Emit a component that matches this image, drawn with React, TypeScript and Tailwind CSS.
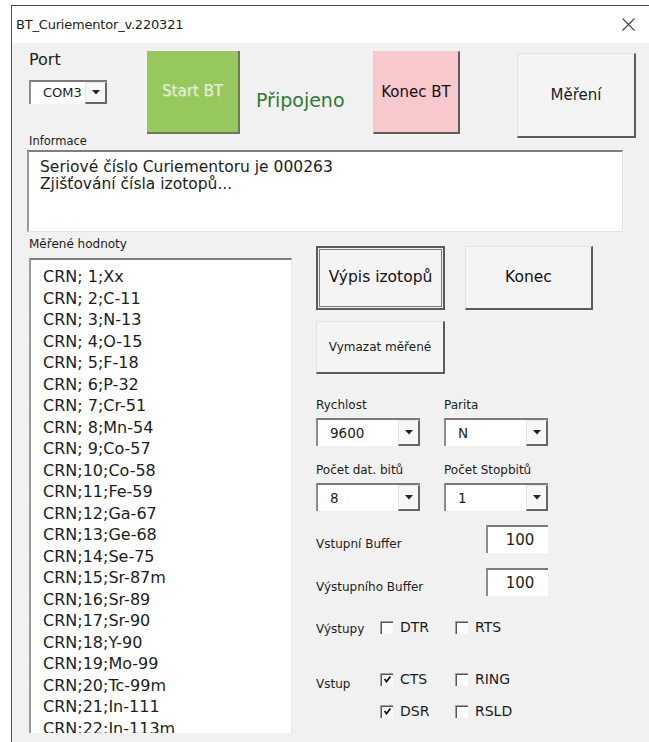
import React from "react";

const font = { fontFamily: '"DejaVu Sans", Verdana, sans-serif' };

const isotopes = [
  "CRN; 1;Xx",
  "CRN; 2;C-11",
  "CRN; 3;N-13",
  "CRN; 4;O-15",
  "CRN; 5;F-18",
  "CRN; 6;P-32",
  "CRN; 7;Cr-51",
  "CRN; 8;Mn-54",
  "CRN; 9;Co-57",
  "CRN;10;Co-58",
  "CRN;11;Fe-59",
  "CRN;12;Ga-67",
  "CRN;13;Ge-68",
  "CRN;14;Se-75",
  "CRN;15;Sr-87m",
  "CRN;16;Sr-89",
  "CRN;17;Sr-90",
  "CRN;18;Y-90",
  "CRN;19;Mo-99",
  "CRN;20;Tc-99m",
  "CRN;21;In-111",
  "CRN;22;In-113m",
];

function DropArrow() {
  return (
    <div className="flex h-full w-[22px] items-center justify-center border-l border-t border-l-[#e6e6e6] border-t-[#e6e6e6] border-r-2 border-b-2 border-r-[#666] border-b-[#666] bg-[#f7f7f7]">
      <svg width="8" height="5" viewBox="0 0 8 5">
        <path d="M0 0 H8 L4 4.5 Z" fill="#222" />
      </svg>
    </div>
  );
}

function Combo({ value, w, h, textCls }: { value: string; w: string; h: string; textCls: string }) {
  return (
    <div className={`flex ${w} ${h} border-l-2 border-t-2 border-l-[#8c8c8c] border-t-[#7a7a7a] bg-white`}>
      <div className={`flex flex-1 items-center pl-[12px] text-[#1c1c1c] ${textCls}`}>{value}</div>
      <DropArrow />
    </div>
  );
}

function RaisedButton({
  label,
  cls,
  textCls,
}: {
  label: string;
  cls: string;
  textCls: string;
}) {
  return (
    <div
      className={`flex items-center justify-center border-l border-t border-l-[#e2e2e2] border-t-[#e2e2e2] border-r-2 border-b-2 border-r-[#5c5c5c] border-b-[#5c5c5c] ${cls}`}
    >
      <span className={textCls}>{label}</span>
    </div>
  );
}

function Check({ label, checked }: { label: string; checked?: boolean }) {
  return (
    <div className="flex h-[16px] w-[75px] items-center">
      <div className="flex h-[13px] w-[13px] items-center justify-center border-l border-t border-[#a3a3a3] bg-[#fbfbfb] shadow-[inset_1px_1px_0_#555]">
        {checked && (
          <svg width="9" height="9" viewBox="0 0 9 9">
            <path d="M1.5 4 L3.5 6.5 L7.5 1.5" stroke="#111" strokeWidth="1.8" fill="none" />
          </svg>
        )}
      </div>
      <span className="ml-[7px] text-[14px] leading-[16px] text-[#1c1c1c]">{label}</span>
    </div>
  );
}

function NumBox({ value }: { value: string }) {
  return (
    <div className="flex h-[28px] w-[62px] items-center justify-center border-l-2 border-t-2 border-l-[#8c8c8c] border-t-[#7a7a7a] bg-white pl-[4px] text-[15px] text-[#1c1c1c]">
      {value}
    </div>
  );
}

export default function App() {
  return (
    <div className="h-[742px] w-[649px] overflow-hidden bg-white pl-[11px] pt-[5px]" style={font}>
      <div className="h-[737px] w-[638px] border-l border-t border-[#4d4d4d] bg-[#f1f1f1]">
        {/* title bar */}
        <div className="flex h-[37px] items-center justify-between bg-white pl-[4px] pr-[14px]">
          <span className="text-[13px] tracking-[-0.2px] text-[#1c1c1c]">BT_Curiementor_v.220321</span>
          <svg width="13" height="13" viewBox="0 0 13 13">
            <path d="M0.5 0.5 L12.5 12.5 M12.5 0.5 L0.5 12.5" stroke="#444" strokeWidth="1.1" />
          </svg>
        </div>

        {/* top row */}
        <div className="flex items-start pl-[17px] pt-[8px]">
          <div className="flex h-[97px] w-[118px] flex-col">
            <span className="text-[16px] leading-[18px] text-[#1c1c1c]">Port</span>
            <div className="mt-[11px]">
              <Combo value="COM3" w="w-[78px]" h="h-[24px]" textCls="text-[13px]" />
            </div>
            <span className="mt-auto pb-[-2px] text-[11.5px] leading-[13px] text-[#1c1c1c]">Informace</span>
          </div>
          <div className="flex h-[83px] w-[93px] items-center justify-center border-r-2 border-b-2 border-r-[#6a7a5a] border-b-[#6a7a5a] bg-[#97c85e]">
            <span className="text-[15px] text-[#e4efd6] [text-shadow:1px_1px_0_#b5d294]">Start BT</span>
          </div>
          <span className="ml-[16px] mt-[37px] w-[117px] text-[19px] leading-[24px] text-[#2f7a34]">Připojeno</span>
          <RaisedButton
            label="Konec BT"
            cls="h-[83px] w-[87px] bg-[#f7c8cc] border-l-[#f7c8cc] border-t-[#f7c8cc]"
            textCls="text-[15px] text-[#111]"
          />
          <div className="ml-[57px] mt-[2px]">
            <RaisedButton label="Měření" cls="h-[85px] w-[119px] bg-[#f4f4f4]" textCls="text-[15px] text-[#1c1c1c]" />
          </div>
        </div>

        {/* info box */}
        <div className="ml-[15px] mt-[2px] h-[82px] w-[596px] border-l-2 border-t-2 border-l-[#9a9a9a] border-t-[#7e7e7e] border-r border-b border-r-[#e4e4e4] border-b-[#e4e4e4] bg-white pl-[11px] pt-[7px] text-[15.5px] leading-[17px] text-[#1c1c1c]">
          <div>Seriové číslo Curiementoru je 000263</div>
          <div>Zjišťování čísla izotopů...</div>
        </div>

        {/* lower section */}
        <div className="mt-[3px] flex">
          <div className="ml-[17px] w-[263px]">
            <div className="mt-[2px] text-[12px] leading-[14px] text-[#1c1c1c]">Měřené hodnoty</div>
            <div className="mt-[7px] h-[475px] overflow-hidden border-l-2 border-t-2 border-l-[#9a9a9a] border-t-[#7e7e7e] border-r border-r-[#e4e4e4] bg-white pl-[12px] pt-[6px] text-[16px] leading-[21.5px] text-[#1c1c1c]">
              {isotopes.map((item) => (
                <div key={item}>{item}</div>
              ))}
            </div>
          </div>

          <div className="ml-[24px] w-[300px] pt-[11px]">
            <div className="flex">
              <div className="flex h-[64px] w-[129px] items-center justify-center border-2 border-[#5a5a5a] bg-[#f4f4f4] shadow-[inset_0_0_0_1px_#f0f0f0,inset_0_0_0_2px_#7a7a7a]">
                <span className="text-[15.5px] text-[#111]">Výpis izotopů</span>
              </div>
              <div className="ml-[20px]">
                <RaisedButton label="Konec" cls="h-[64px] w-[128px] bg-[#f4f4f4]" textCls="text-[15.5px] text-[#111]" />
              </div>
            </div>
            <div className="mt-[11px]">
              <RaisedButton label="Vymazat měřené" cls="h-[53px] w-[129px] bg-[#f4f4f4]" textCls="text-[12px] text-[#1c1c1c]" />
            </div>

            <div className="grid w-[256px] grid-cols-2">
              <div>
                <div className="mt-[24px] text-[12px] leading-[14px] text-[#1c1c1c]">Rychlost</div>
                <div className="mt-[6px]">
                  <Combo value="9600" w="w-[104px]" h="h-[28px]" textCls="text-[13.5px]" />
                </div>
                <div className="mt-[17px] text-[12px] leading-[14px] text-[#1c1c1c]">Počet dat. bitů</div>
                <div className="mt-[6px]">
                  <Combo value="8" w="w-[104px]" h="h-[28px]" textCls="text-[13.5px]" />
                </div>
              </div>
              <div>
                <div className="mt-[24px] text-[12px] leading-[14px] text-[#1c1c1c]">Parita</div>
                <div className="mt-[6px]">
                  <Combo value="N" w="w-[104px]" h="h-[28px]" textCls="text-[13.5px]" />
                </div>
                <div className="mt-[17px] text-[12px] leading-[14px] text-[#1c1c1c]">Počet Stopbitů</div>
                <div className="mt-[6px]">
                  <Combo value="1" w="w-[104px]" h="h-[28px]" textCls="text-[13.5px]" />
                </div>
              </div>
            </div>

            <div className="mt-[14px] flex">
              <span className="mt-[12px] w-[170px] text-[12px] leading-[14px] text-[#1c1c1c]">Vstupní Buffer</span>
              <NumBox value="100" />
            </div>
            <div className="mt-[15px] flex">
              <span className="mt-[12px] w-[170px] text-[12px] leading-[14px] text-[#1c1c1c]">Výstupního Buffer</span>
              <NumBox value="100" />
            </div>

            <div className="mt-[23px] flex">
              <span className="mt-[3px] w-[64px] text-[12px] leading-[14px] text-[#1c1c1c]">Výstupy</span>
              <Check label="DTR" />
              <Check label="RTS" />
            </div>

            <div className="mt-[35px] flex">
              <span className="mt-[6px] w-[64px] text-[12px] leading-[14px] text-[#1c1c1c]">Vstup</span>
              <div className="flex flex-col gap-[16px]">
                <div className="flex">
                  <Check label="CTS" checked />
                  <Check label="RING" />
                </div>
                <div className="flex">
                  <Check label="DSR" checked />
                  <Check label="RSLD" />
                </div>
              </div>
            </div>
          </div>
        </div>
      </div>
    </div>
  );
}
